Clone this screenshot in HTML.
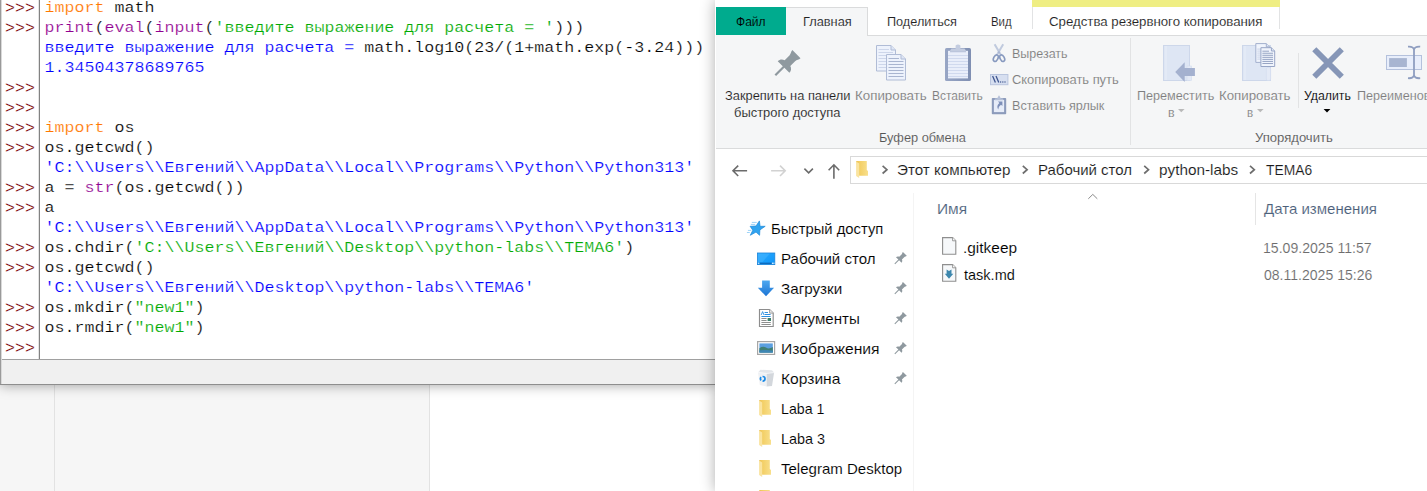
<!DOCTYPE html>
<html lang="ru"><head><meta charset="utf-8"><title>IDLE Shell / TEMA6</title>
<style>
html,body{margin:0;padding:0}
body{width:1427px;height:491px;overflow:hidden;position:relative;background:#fff;font-family:"Liberation Sans",sans-serif}
.abs{position:absolute}
#under{left:0;top:385px;width:430px;height:106px;background:#f6f6f6}
#under i{position:absolute;top:0;width:1px;height:107px;background:#e2e2e2}
#idle{left:0;top:0;width:716px;height:385px;background:#fff;box-shadow:0 0 12px rgba(0,0,0,.38)}
#idle .lb0{left:0;top:0;width:1px;height:385px;background:#9a9a9a}
#idle .lb1{left:1px;top:0;width:1px;height:384px;background:#d9d9d9}
#idle .sep0{left:38px;top:0;width:1px;height:359px;background:#e3e3e3}
#idle .sep1{left:39px;top:0;width:1px;height:359px;background:#828282}
#idle .stat{left:2px;top:359px;width:714px;height:25px;background:#f0f0f0;border-top:1px solid #a0a0a0;box-sizing:border-box}
#idle .bb{left:0;top:384px;width:716px;height:1px;background:#8e8e8e}
pre{margin:0;position:absolute;font-family:"Liberation Mono",monospace;font-size:16.66px;line-height:20px;white-space:pre;color:#000;-webkit-text-stroke:0.22px #fff}
#prompts{left:5px;top:-1.5px;color:#770000}
#code{left:44.5px;top:-1.2px;line-height:22.9885px;transform:scaleY(.87);transform-origin:0 0}
.k{color:#ff7700}.b{color:#900090}.s{color:#00aa00}.o{color:#0000ff}
#exp{left:715px;top:0;width:712px;height:491px;background:#fff;box-shadow:0 0 14px rgba(0,0,0,.32);overflow:hidden}
#x{position:absolute;left:-715px;top:0;width:1427px;height:491px}
.t{position:absolute;white-space:pre;line-height:1;transform-origin:0 0}
#ribbon{left:716px;top:35px;width:711px;height:113px;background:#f5f6f7;border-bottom:1px solid #dadbdc;box-sizing:content-box}
</style></head><body>
<div id="under" class="abs"><i style="left:54px"></i><i style="left:429px"></i></div>

<div id="idle" class="abs">
<div class="abs lb0"></div><div class="abs lb1"></div>
<div class="abs sep0"></div><div class="abs sep1"></div>
<pre id="prompts">&gt;&gt;&gt;
&gt;&gt;&gt;


&gt;&gt;&gt;
&gt;&gt;&gt;
&gt;&gt;&gt;
&gt;&gt;&gt;

&gt;&gt;&gt;
&gt;&gt;&gt;

&gt;&gt;&gt;
&gt;&gt;&gt;

&gt;&gt;&gt;
&gt;&gt;&gt;
&gt;&gt;&gt;</pre>
<pre id="code"><span class="k">import</span> math
<span class="b">print</span>(<span class="b">eval</span>(<span class="b">input</span>(<span class="s">'введите выражение для расчета = '</span>)))
<span class="o">введите выражение для расчета = </span>math.log10(23/(1+math.exp(-3.24)))
<span class="o">1.34504378689765</span>


<span class="k">import</span> os
os.getcwd()
<span class="o">'C:\\Users\\Евгений\\AppData\\Local\\Programs\\Python\\Python313'</span>
a = <span class="b">str</span>(os.getcwd())
a
<span class="o">'C:\\Users\\Евгений\\AppData\\Local\\Programs\\Python\\Python313'</span>
os.chdir(<span class="s">'C:\\Users\\Евгений\\Desktop\\python-labs\\TEMA6'</span>)
os.getcwd()
<span class="o">'C:\\Users\\Евгений\\Desktop\\python-labs\\TEMA6'</span>
os.mkdir(<span class="s">"new1"</span>)
os.rmdir(<span class="s">"new1"</span>)
</pre>
<div class="abs stat"></div><div class="abs bb"></div>
</div>

<div id="exp" class="abs"><div id="x">
<!-- tab strip -->
<div class="abs" style="left:1032px;top:0;width:248px;height:7px;background:#efee83"></div>
<div class="abs" style="left:1032px;top:7px;width:1px;height:22px;background:#e2e3e4"></div>
<div class="abs" style="left:1279px;top:7px;width:1px;height:22px;background:#e2e3e4"></div>
<div id="ribbon" class="abs"></div>
<div class="abs" style="left:868px;top:35px;width:559px;height:1px;background:#dadbdc"></div>
<div class="abs" style="left:716px;top:7px;width:70px;height:28px;background:#00ab8e"></div>
<div class="abs" style="left:786px;top:7px;width:82px;height:29px;background:#f5f6f7;border-top:1px solid #dadbdc;border-right:1px solid #dadbdc;box-sizing:border-box"></div>
<!-- ribbon separators -->
<div class="abs" style="left:1130px;top:38px;width:1px;height:107px;background:#e2e3e4"></div>
<div class="abs" style="left:1298px;top:53px;width:1px;height:55px;background:#e2e3e4"></div>
<!-- address bar -->
<div class="abs" style="left:850px;top:156px;width:600px;height:28px;border:1px solid #d9d9d9;box-sizing:border-box;background:#fff"></div>
<!-- pane dividers -->
<div class="abs" style="left:913px;top:193px;width:1px;height:300px;background:#f4f4f4"></div>
<div class="abs" style="left:1255px;top:193px;width:1px;height:32px;background:#e5e5e5"></div>
<svg class="abs" style="left:715px;top:0" width="712" height="491" viewBox="715 0 712 491">
<defs>
<path id="pin" d="M-1.1,0 L-1.1,-11.7 L-8.25,-11.7 C-8.25,-14.6 -6.2,-16.6 -4,-17.2 L-4,-24 C-4,-26.3 -5.75,-27.6 -5.75,-29.9 L5.75,-29.9 C5.75,-27.6 4,-26.3 4,-24 L4,-17.2 C6.2,-16.6 8.25,-14.6 8.25,-11.7 L1.1,-11.7 L1.1,0 Z"/>
<linearGradient id="gboard" x1="0" x2="1" y1="0" y2="0"><stop offset="0" stop-color="#98a6c5"/><stop offset="1" stop-color="#7f8fb2"/></linearGradient>
<linearGradient id="gdl" x1="0" x2="0" y1="0" y2="1"><stop offset="0" stop-color="#4ea8f0"/><stop offset="1" stop-color="#1c74d4"/></linearGradient>
<linearGradient id="gdesk" x1="0" x2="1" y1="0" y2="1"><stop offset="0" stop-color="#2aa9ff"/><stop offset="1" stop-color="#0c95f8"/></linearGradient>
<linearGradient id="gfold" x1="0" x2="1" y1="0" y2="0"><stop offset="0" stop-color="#eec153"/><stop offset=".3" stop-color="#f3cf66"/><stop offset="1" stop-color="#f8df8c"/></linearGradient>
<g id="folder"><path d="M0.1,0 H10.8 V9 L12,9.9 V14.8 H3.2 Z" fill="url(#gfold)"/><path d="M0.1,0.4 L3.2,2.6 V16.9 L0.1,15.1 Z" fill="#fae4a0"/></g>
<g id="doc"><path d="M0.5,0.5 H15 L19.5,5 V26 H0.5 Z" fill="#edf2fc" stroke="#b0bcd6"/><path d="M15,0.5 V5 H19.5" fill="#dfe6f5" stroke="#b0bcd6"/></g>
<g id="chev"><path d="M0.6,0.6 L4.9,4.4 L0.6,8.2" fill="none" stroke="#6e6e6e" stroke-width="1.7"/></g>
</defs>

<!-- ribbon: pin -->
<use href="#pin" transform="translate(775.3,75.3) rotate(45)" fill="#8f999f"/>

<!-- ribbon: copy -->
<g transform="translate(876,45)"><use href="#doc"/>
<g stroke="#cdd6ea" stroke-width="1"><path d="M2.5,4.5H13 M2.5,7.5H17 M2.5,10.5H17 M2.5,13.5H17 M2.5,16.5H17 M2.5,19.5H17 M2.5,22.5H17"/></g></g>
<g transform="translate(886,54)"><use href="#doc"/>
<g stroke="#a9b5d0" stroke-width="1.1"><path d="M2.5,4.5H13 M2.5,7.5H17.5 M2.5,10.5H17.5 M2.5,13.5H17.5 M2.5,16.5H17.5 M2.5,19.5H17.5 M2.5,22.5H17.5"/></g></g>

<!-- ribbon: paste -->
<g transform="translate(945,44)">
<rect x="0" y="4" width="26" height="33" rx="1.6" fill="url(#gboard)"/>
<rect x="3" y="6.8" width="20" height="27.6" fill="#e9eefa"/>
<g stroke="#d0d9ee" stroke-width="1"><path d="M3,11.5H23 M3,14.5H23 M3,17.5H23 M3,20.5H23 M3,23.5H23 M3,26.5H23 M3,29.5H23 M3,32.5H23"/></g>
<path d="M10.6,4.4 V1.6 Q13,-0.6 15.4,1.6 V4.4 L19.5,4.6 Q21,6 21,7.4 H5 Q5,6 6.5,4.6 Z" fill="#c3cce0"/>
<path d="M5,7.4 H21 V8.2 H5 Z" fill="#aab6d0"/>
</g>

<!-- scissors -->
<g fill="none">
<path d="M994.6,44.2 L1001.2,55.6" stroke="#c0cade" stroke-width="2"/><path d="M1003.2,44.2 L996.6,55.6" stroke="#c0cade" stroke-width="2"/>
<ellipse cx="995.8" cy="58.2" rx="2.1" ry="3.5" transform="rotate(28 995.8 58.2)" stroke="#8799bf" stroke-width="1.6"/>
<ellipse cx="1002.2" cy="58.2" rx="2.1" ry="3.5" transform="rotate(-28 1002.2 58.2)" stroke="#8799bf" stroke-width="1.6"/>
<circle cx="998.9" cy="52.4" r="1.1" fill="#a9b6d2"/>
</g>

<!-- copy path -->
<g transform="translate(990,74)">
<rect x="0.5" y="0.5" width="17.4" height="10.2" fill="#d7dff0" stroke="#b9c5de"/>
<g stroke="#3f568f" stroke-width="1.3"><path d="M2.6,2 L5.4,8.6 M6,2 L8.8,8.6"/></g>
<g fill="#3f568f"><rect x="10" y="7.4" width="1.2" height="1.2"/><rect x="12.2" y="7.4" width="1.2" height="1.2"/><rect x="14.4" y="7.4" width="1.2" height="1.2"/></g>
</g>

<!-- paste shortcut -->
<g transform="translate(991.8,95)">
<rect x="0" y="3" width="14.4" height="16.2" rx=".8" fill="#8c9bbb"/>
<rect x="2.1" y="4.9" width="10.2" height="12.2" fill="#e6ecf8"/>
<path d="M5.4,3.2 L7.2,0.2 L9,3.2 L11.4,3.4 V5.2 H3 V3.4 Z" fill="#b5c0d8"/>
<path d="M6.2,6.6 H10.6 V11 L9.2,9.7 Q6.6,11 6.4,14.6 Q4.2,10.6 7.6,8 Z" fill="#7d8fb8"/>
</g>

<!-- move to -->
<g>
<rect x="1163.5" y="45.5" width="26" height="35" fill="#dee6f4" stroke="#cdd7ea"/>
<path d="M1166,46 V80" stroke="#e8eef8" stroke-width="1"/>
<rect x="1187" y="66" width="4.6" height="14.6" fill="#e4eaf6" stroke="#d3dcee" stroke-width=".6"/>
<path d="M1175.2,72.1 L1184.7,62.2 V68 H1194.9 V75.9 H1184.7 V82 Z" fill="#a4b1cf"/>
</g>

<!-- copy to -->
<g>
<rect x="1242.5" y="45.5" width="28" height="35" fill="#dee6f4" stroke="#cdd7ea"/>
<path d="M1245,46 V80" stroke="#e8eef8" stroke-width="1"/>
<rect x="1266.4" y="67.5" width="4.2" height="13" rx="1.5" fill="#e4eaf6" stroke="#d3dcee" stroke-width=".6"/>
<g transform="translate(1255.3,43.1)"><path d="M0.5,0.5 H11 L14.3,3.8 V19.3 H0.5 Z" fill="#f0f4fc" stroke="#a3b0cd"/><path d="M11,0.5 V3.8 H14.3" fill="#dfe6f5" stroke="#a3b0cd"/>
<g stroke="#c6cfe4" stroke-width=".9"><path d="M2,6H5.5 M2,8H5.5 M2,10H5.5 M2,12H5.5 M2,14H5.5 M2,16H5.5"/></g></g>
<g transform="translate(1260.4,47.2)"><path d="M0.5,0.5 H11 L14.3,3.8 V19.3 H0.5 Z" fill="#f0f4fc" stroke="#98a6c6"/><path d="M11,0.5 V3.8 H14.3" fill="#dfe6f5" stroke="#98a6c6"/>
<g stroke="#8d9cbd" stroke-width=".9"><path d="M2,4H8.6 M2,6.05H12.6 M2,8.1H12.6 M2,10.15H12.6 M2,12.2H12.6 M2,14.25H12.6 M2,16.3H12.6"/></g></g>
</g>

<!-- delete X -->
<g stroke="#8696b7" stroke-width="5.8"><path d="M1314.3,49.2 L1341.8,76.7 M1341.8,49.2 L1314.3,76.7"/></g>

<!-- rename -->
<g>
<rect x="1386.5" y="55.5" width="35" height="14" fill="#e8eefb" stroke="#b4c1dc"/>
<rect x="1389.1" y="58.1" width="17.8" height="8.9" fill="#a8b5d1"/>
<path d="M1408,46.6 Q1413.2,46.2 1414,49.5 Q1414.8,46.2 1420.2,46.6 M1408,78.2 Q1413.2,78.6 1414,75.3 Q1414.8,78.6 1420.2,78.2 M1414,48 V77" fill="none" stroke="#8f9ec0" stroke-width="1.8"/>
</g>

<!-- dropdown arrows -->
<path d="M1178,109 H1184.6 L1181.3,112.3 Z" fill="#b9b9b9"/>
<path d="M1257,109 H1263.6 L1260.3,112.3 Z" fill="#b9b9b9"/>
<path d="M1323.6,109 H1330.4 L1327,112.6 Z" fill="#000"/>
<!-- address row arrows -->
<g fill="none" stroke="#6b6b6b" stroke-width="1.6">
<path d="M747.1,170.8 H733 M738.2,165.6 L733,170.8 L738.2,176"/>
<path d="M804.4,168.6 L808.65,172.8 L812.9,168.6"/>
<path d="M833.9,178.8 V164.8 M828.6,170.2 L833.9,164.8 L839.2,170.2"/>
</g>
<g fill="none" stroke="#d2d2d2" stroke-width="1.6"><path d="M771.1,170.8 H785.2 M780,165.6 L785.2,170.8 L780,176"/></g>
<use href="#folder" transform="translate(856,161)"/>
<use href="#chev" transform="translate(882,165.3)"/>
<use href="#chev" transform="translate(1022.2,165.3)"/>
<use href="#chev" transform="translate(1143.6,165.3)"/>
<use href="#chev" transform="translate(1249.4,165.3)"/>
<!-- sort indicator -->
<path d="M1088.3,198.8 L1092.8,194.4 L1097.3,198.8" fill="none" stroke="#8a8a8a" stroke-width="1"/>

<!-- nav: star -->
<g>
<path d="M759.4,220.9 L760.1,226.3 L765.2,226.3 L759.9,229.9 L759.6,235.3 L756,232.1 L750.3,235.3 L752.8,230.2 L750.1,226.3 L756,226 Z" fill="#2fa3ef" stroke="#1c88da" stroke-width=".7" stroke-linejoin="round"/>
<g stroke="#9ed3f7" stroke-width="1"><path d="M751.8,222.4 H756.7 M750.8,224.4 H755.2 M747.9,230.4 H751.3 M746.9,232.5 H749.8"/></g>
</g>
<!-- nav: desktop -->
<g>
<rect x="757.4" y="253" width="17.4" height="11.6" fill="url(#gdesk)" stroke="#1b82d8" stroke-width=".8"/>
<path d="M757.8,253.4 H770 L762.5,262 H757.8 Z" fill="#5cc0ff" opacity=".35"/>
<rect x="759.4" y="262.7" width="12.4" height="1.1" fill="#0c5fae"/>
<rect x="758.2" y="262.7" width="1.1" height="1.1" fill="#fff"/><rect x="771.9" y="262.7" width="1.1" height="1.1" fill="#fff"/><rect x="773.3" y="262.7" width="1.1" height="1.1" fill="#fff"/>
</g>
<!-- nav: downloads -->
<path d="M762.1,280.4 H769.8 V287.7 H774.1 L766,296.3 L757.8,287.7 H762.1 Z" fill="url(#gdl)"/>
<!-- nav: documents -->
<g transform="translate(759,309)">
<path d="M0.5,0.5 H10.6 L14.2,4.1 V17.5 H0.5 Z" fill="#fff" stroke="#8d8d8d" stroke-width="1.15"/>
<path d="M10.6,0.5 V4.1 H14.2" fill="#eee" stroke="#9b9b9b"/>
<g stroke="#2b8fe0" stroke-width="1"><path d="M5.6,3.5H9 M5.6,5.5H11.6 M2.4,7.5H11.6"/></g>
<path d="M2.2,6 L3.6,2.6 L5,6" stroke="#2b8fe0" fill="none" stroke-width=".9"/>
<g stroke="#8e8e8e" stroke-width="1"><path d="M2.4,9.5H7.6 M2.4,11.5H7.6 M2.4,13.5H11.8 M2.4,15.5H11.8"/></g>
<rect x="8.6" y="9" width="3.4" height="3" fill="#3d7f6b"/>
</g>
<!-- nav: pictures -->
<g transform="translate(757,341)">
<rect x="0.6" y="0.6" width="17" height="12.8" fill="#fff" stroke="#a6a6a6" stroke-width="1.2"/>
<rect x="2.4" y="2.4" width="13.4" height="9.2" fill="#5b9fe0"/>
<path d="M2.4,7.2 Q6,4.6 9,6.6 T15.8,6 V11.6 H2.4 Z" fill="#3f7f74"/>
<path d="M2.4,9.6 Q8,8.2 15.8,9.8 V11.6 H2.4 Z" fill="#3f86b5"/>
</g>
<!-- nav: recycle bin -->
<g>
<path d="M760.4,369.8 L772,370.2 L774.1,372.6 L766.7,373.4 L758,372.4 Z" fill="#e3e6ea"/>
<path d="M758,372.4 L766.7,373.4 V386.6 L759.8,384.9 Z" fill="#eff1f4"/>
<path d="M766.7,373.4 L774.1,372.6 L772,386 L766.7,386.6 Z" fill="#d3d7dc"/>
<path d="M758,372.4 L766.7,373.4 L774.1,372.6" fill="none" stroke="#f8f9fa" stroke-width=".8"/>
<circle cx="762.7" cy="378.8" r="2.3" fill="none" stroke="#1a8ae6" stroke-width="1.7" stroke-dasharray="3.4 1.4"/>
</g>
<!-- nav: folders -->
<use href="#folder" transform="translate(759,400)"/>
<use href="#folder" transform="translate(759,430)"/>
<use href="#folder" transform="translate(759,460)"/>
<use href="#folder" transform="translate(759,490)"/>
<!-- nav pins -->
<g fill="#8f999f">
<use href="#pin" transform="translate(894.8,263.9) rotate(45) scale(.475)"/>
<use href="#pin" transform="translate(894.8,293.9) rotate(45) scale(.475)"/>
<use href="#pin" transform="translate(894.8,323.9) rotate(45) scale(.475)"/>
<use href="#pin" transform="translate(894.8,353.9) rotate(45) scale(.475)"/>
<use href="#pin" transform="translate(894.8,383.9) rotate(45) scale(.475)"/>
</g>
<!-- file icons -->
<g transform="translate(942,237)">
<path d="M0.6,0.6 H10.6 L13.8,3.8 V17.2 H0.6 Z" fill="#f6f8fa" stroke="#8e8e8e" stroke-width="1.1"/>
<path d="M10.6,0.6 V3.8 H13.8" fill="#fff" stroke="#8e8e8e" stroke-width=".9"/>
</g>
<g transform="translate(942,264)">
<path d="M0.6,0.6 H10.6 L13.8,3.8 V17.2 H0.6 Z" fill="#f6f8fa" stroke="#8e8e8e" stroke-width="1.1"/>
<path d="M10.6,0.6 V3.8 H13.8" fill="#fff" stroke="#8e8e8e" stroke-width=".9"/>
<path d="M4.6,5.4 L7,7 L9.5,5.4 V9.8 H11.3 L7,14.8 L2.8,9.8 H4.6 Z" fill="#3d87ad"/>
</g>
</svg>

<span class="t" style="left:736.42px;top:15.00px;font-size:13.2px;color:#000;-webkit-text-stroke:0.1px #00ab8e;transform:scaleX(0.9106)">Файл</span>
<span class="t" style="left:802.93px;top:15.00px;font-size:13.2px;color:#222;-webkit-text-stroke:0.1px #f5f6f7;transform:scaleX(0.9699)">Главная</span>
<span class="t" style="left:886.54px;top:15.00px;font-size:13.2px;color:#222;-webkit-text-stroke:0.1px #fff;transform:scaleX(0.9606)">Поделиться</span>
<span class="t" style="left:991.13px;top:15.00px;font-size:13.2px;color:#222;-webkit-text-stroke:0.1px #fff;transform:scaleX(0.8659)">Вид</span>
<span class="t" style="left:1049.15px;top:15.00px;font-size:13.2px;color:#222;-webkit-text-stroke:0.1px #fff;transform:scaleX(1.0038)">Средства резервного копирования</span>
<span class="t" style="left:725.01px;top:89.00px;font-size:13.2px;color:#1e1e1e;-webkit-text-stroke:0.1px #f5f6f7;transform:scaleX(0.9741)">Закрепить на панели</span>
<span class="t" style="left:734.17px;top:106.00px;font-size:13.2px;color:#1e1e1e;-webkit-text-stroke:0.1px #f5f6f7;transform:scaleX(0.9796)">быстрого доступа</span>
<span class="t" style="left:855.09px;top:89.00px;font-size:13.2px;color:#7e7e7e;-webkit-text-stroke:0.1px #f5f6f7;transform:scaleX(1.0101)">Копировать</span>
<span class="t" style="left:932.19px;top:89.00px;font-size:13.2px;color:#7e7e7e;-webkit-text-stroke:0.1px #f5f6f7;transform:scaleX(0.9069)">Вставить</span>
<span class="t" style="left:1011.95px;top:47.00px;font-size:13.2px;color:#7e7e7e;-webkit-text-stroke:0.1px #f5f6f7;transform:scaleX(0.9467)">Вырезать</span>
<span class="t" style="left:1012.17px;top:73.00px;font-size:13.2px;color:#7e7e7e;-webkit-text-stroke:0.1px #f5f6f7;transform:scaleX(0.9782)">Скопировать путь</span>
<span class="t" style="left:1011.94px;top:99.00px;font-size:13.2px;color:#7e7e7e;-webkit-text-stroke:0.1px #f5f6f7;transform:scaleX(0.9571)">Вставить ярлык</span>
<span class="t" style="left:1136.94px;top:89.00px;font-size:13.2px;color:#7e7e7e;-webkit-text-stroke:0.1px #f5f6f7;transform:scaleX(0.9565)">Переместить</span>
<span class="t" style="left:1167.55px;top:106.00px;font-size:13.2px;color:#7e7e7e;-webkit-text-stroke:0.1px #f5f6f7;transform:scaleX(0.9455)">в</span>
<span class="t" style="left:1219.09px;top:89.00px;font-size:13.2px;color:#7e7e7e;-webkit-text-stroke:0.1px #f5f6f7;transform:scaleX(1.0072)">Копировать</span>
<span class="t" style="left:1246.63px;top:106.00px;font-size:13.2px;color:#7e7e7e;-webkit-text-stroke:0.1px #f5f6f7;transform:scaleX(0.8727)">в</span>
<span class="t" style="left:1304.44px;top:89.00px;font-size:13.2px;color:#000;-webkit-text-stroke:0.1px #f5f6f7;transform:scaleX(0.9299)">Удалить</span>
<span class="t" style="left:1356.55px;top:89.00px;font-size:13.2px;color:#7e7e7e;-webkit-text-stroke:0.1px #f5f6f7;transform:scaleX(0.9543)">Переименовать</span>
<span class="t" style="left:878.93px;top:131.00px;font-size:13.2px;color:#555;-webkit-text-stroke:0.1px #f5f6f7;transform:scaleX(0.9695)">Буфер обмена</span>
<span class="t" style="left:1255.40px;top:131.00px;font-size:13.2px;color:#555;-webkit-text-stroke:0.1px #f5f6f7;transform:scaleX(0.9910)">Упорядочить</span>
<span class="t" style="left:897.49px;top:162.00px;font-size:15px;color:#1a1a1a;-webkit-text-stroke:0.12px #fff;transform:scaleX(1.0118)">Этот компьютер</span>
<span class="t" style="left:1038.25px;top:162.00px;font-size:15px;color:#1a1a1a;-webkit-text-stroke:0.12px #fff;transform:scaleX(0.9978)">Рабочий стол</span>
<span class="t" style="left:1159.08px;top:162.00px;font-size:15px;color:#1a1a1a;-webkit-text-stroke:0.12px #fff;transform:scaleX(1.0211)">python-labs</span>
<span class="t" style="left:1266.27px;top:162.00px;font-size:15px;color:#1a1a1a;-webkit-text-stroke:0.12px #fff;transform:scaleX(0.9224)">TEMA6</span>
<span class="t" style="left:937.21px;top:201.00px;font-size:15px;color:#4c607a;-webkit-text-stroke:0.12px #fff;transform:scaleX(1.0296)">Имя</span>
<span class="t" style="left:1264.10px;top:201.00px;font-size:15px;color:#4c607a;-webkit-text-stroke:0.12px #fff;transform:scaleX(1.0022)">Дата изменения</span>
<span class="t" style="left:963.21px;top:240.00px;font-size:15px;color:#000;-webkit-text-stroke:0.12px #fff;transform:scaleX(1.0286)">.gitkeep</span>
<span class="t" style="left:964.26px;top:267.00px;font-size:15px;color:#000;-webkit-text-stroke:0.12px #fff;transform:scaleX(0.9678)">task.md</span>
<span class="t" style="left:1263.33px;top:240.00px;font-size:15px;color:#6d6d6d;-webkit-text-stroke:0.12px #fff;transform:scaleX(0.9389)">15.09.2025 11:57</span>
<span class="t" style="left:1264.03px;top:267.00px;font-size:15px;color:#6d6d6d;-webkit-text-stroke:0.12px #fff;transform:scaleX(0.9362)">08.11.2025 15:26</span>
<span class="t" style="left:770.87px;top:221.00px;font-size:15px;color:#000;-webkit-text-stroke:0.12px #fff;transform:scaleX(0.9861)">Быстрый доступ</span>
<span class="t" style="left:780.64px;top:251.00px;font-size:15px;color:#000;-webkit-text-stroke:0.12px #fff;transform:scaleX(1.0043)">Рабочий стол</span>
<span class="t" style="left:780.99px;top:281.00px;font-size:15px;color:#000;-webkit-text-stroke:0.12px #fff;transform:scaleX(1.0145)">Загрузки</span>
<span class="t" style="left:781.50px;top:311.00px;font-size:15px;color:#000;-webkit-text-stroke:0.12px #fff;transform:scaleX(1.0072)">Документы</span>
<span class="t" style="left:780.79px;top:341.00px;font-size:15px;color:#000;-webkit-text-stroke:0.12px #fff;transform:scaleX(1.0457)">Изображения</span>
<span class="t" style="left:780.80px;top:371.00px;font-size:15px;color:#000;-webkit-text-stroke:0.12px #fff;transform:scaleX(1.0393)">Корзина</span>
<span class="t" style="left:780.92px;top:401.00px;font-size:15px;color:#000;-webkit-text-stroke:0.12px #fff;transform:scaleX(0.9455)">Laba 1</span>
<span class="t" style="left:780.90px;top:431.00px;font-size:15px;color:#000;-webkit-text-stroke:0.12px #fff;transform:scaleX(0.9591)">Laba 3</span>
<span class="t" style="left:780.85px;top:461.00px;font-size:15px;color:#000;-webkit-text-stroke:0.12px #fff;transform:scaleX(1.0017)">Telegram Desktop</span>
</div></div>
</body></html>
